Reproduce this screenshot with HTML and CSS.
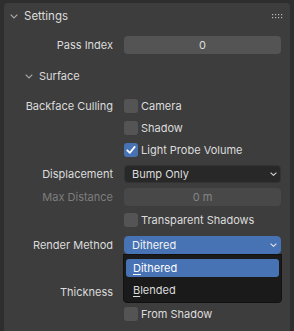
FILE: index.html
```html
<!DOCTYPE html>
<html>
<head>
<meta charset="utf-8">
<link rel="stylesheet" href="styles.css">
</head>
<body>
<div class="panel">
  <div class="panel-header">
    <svg class="chev" width="8" height="5" viewBox="0 0 8 5"><path d="M0.7 0.7 L4 4 L7.3 0.7" fill="none" stroke="#a8a8a8" stroke-width="1.2"/></svg>
    <span class="title">Settings</span>
    <svg class="grip" width="11" height="5" viewBox="0 0 11 5">
      <g fill="#b8b8b8"><rect x="0" y="0" width="1.2" height="1.2"/><rect x="3" y="0" width="1.2" height="1.2"/><rect x="6" y="0" width="1.2" height="1.2"/><rect x="9" y="0" width="1.2" height="1.2"/><rect x="0" y="3" width="1.2" height="1.2"/><rect x="3" y="3" width="1.2" height="1.2"/><rect x="6" y="3" width="1.2" height="1.2"/><rect x="9" y="3" width="1.2" height="1.2"/></g>
    </svg>
  </div>

  <div class="row pass-row">
    <div class="label">Pass Index</div>
    <div class="field num">0</div>
  </div>

  <div class="subheader">
    <svg class="chev" width="8" height="5" viewBox="0 0 8 5"><path d="M0.7 0.7 L4 4 L7.3 0.7" fill="none" stroke="#a8a8a8" stroke-width="1.2"/></svg>
    <span>Surface</span>
  </div>

  <div class="rows">
    <div class="row">
      <div class="label">Backface Culling</div>
      <div class="check"><span class="box"></span><span>Camera</span></div>
    </div>
    <div class="row">
      <div class="label"></div>
      <div class="check"><span class="box"></span><span>Shadow</span></div>
    </div>
    <div class="row">
      <div class="label"></div>
      <div class="check"><span class="box on"><svg width="14" height="14" viewBox="0 0 14 14"><path d="M3.3 7.3 L5.9 9.8 L10.7 3.9" fill="none" stroke="#fff" stroke-width="1.8" stroke-linecap="round" stroke-linejoin="round"/></svg></span><span>Light Probe Volume</span></div>
    </div>
    <div class="row sp2">
      <div class="label">Displacement</div>
      <div class="field menu"><span>Bump Only</span><svg width="7" height="4" viewBox="0 0 7 4"><path d="M0.6 0.6 L3.5 3.3 L6.4 0.6" fill="none" stroke="#d8d8d8" stroke-width="1.1"/></svg></div>
    </div>
    <div class="row sp1">
      <div class="label dim">Max Distance</div>
      <div class="field num disabled">0 m</div>
    </div>
    <div class="row sp1">
      <div class="label"></div>
      <div class="check"><span class="box"></span><span>Transparent Shadows</span></div>
    </div>
    <div class="row sp3 top">
      <div class="label">Render Method</div>
      <div class="field menu active">
        <span>Dithered</span><svg width="7" height="4" viewBox="0 0 7 4"><path d="M0.6 0.6 L3.5 3.3 L6.4 0.6" fill="none" stroke="#e8e8e8" stroke-width="1.1"/></svg>
        <div class="popup">
          <div class="item sel"><u>D</u>ithered</div>
          <div class="item"><u>B</u>lended</div>
        </div>
      </div>
    </div>
    <div class="row">
      <div class="label"></div>
      <div class="check"><span class="box"></span></div>
    </div>
    <div class="row sp3">
      <div class="label">Thickness</div>
      <div class="field menu"></div>
    </div>
    <div class="row">
      <div class="label"></div>
      <div class="check"><span class="box"></span><span>From Shadow</span></div>
    </div>
  </div>
</div>
</body>
</html>
```

FILE: styles.css
```css
html, body {
  margin: 0;
  padding: 0;
}
body {
  width: 294px;
  height: 331px;
  overflow: hidden;
  background: #2e2e2e;
  font-family: Inter, "Noto Sans", sans-serif;
  font-size: 11px;
  color: #dcdcdc;
}
.panel {
  margin: 3px 4px 0 4px;
  height: 340px;
  background: #3d3d3d;
  border-radius: 4px 4px 0 0;
  box-sizing: border-box;
  padding-right: 9px;
}
.panel-header {
  height: 26px;
  display: flex;
  align-items: center;
  padding-left: 6px;
  margin-right: -2px;
}
.chev {
  flex: none;
  display: block;
}
.title {
  margin-left: 6px;
  font-size: 11.5px;
  flex: 1;
}
.grip {
  display: block;
}
.row {
  display: grid;
  grid-template-columns: 109px 1fr;
  column-gap: 11px;
  align-items: center;
  height: 18px;
}
.row.top {
  position: relative;
  z-index: 2;
}
.pass-row {
  margin-top: 7px;
}
.label {
  text-align: right;
  white-space: nowrap;
  line-height: 18px;
}
.label.dim {
  color: #7e7e7e;
}
.field {
  height: 18px;
  border-radius: 4px;
  box-sizing: border-box;
  line-height: 18px;
  white-space: nowrap;
}
.field.num {
  background: #545454;
  text-align: center;
}
.field.disabled {
  background: #484848;
  color: #858585;
}
.field.menu {
  background: #282828;
  border: 1px solid #333333;
  display: flex;
  align-items: center;
  justify-content: space-between;
  padding: 0 3px 0 7px;
  position: relative;
}
.field.menu svg {
  display: block;
}
.field.active {
  background: #4772b3;
  border-color: #4772b3;
  color: #f2f2f2;
}
.subheader {
  margin-top: 12px;
  height: 20px;
  display: flex;
  align-items: center;
  padding-left: 21px;
}
.subheader span {
  margin-left: 6px;
}
.rows {
  margin-top: 11px;
  display: flex;
  flex-direction: column;
  gap: 4px;
}
.sp1 { margin-top: 1px; }
.sp2 { margin-top: 2px; }
.sp3 { margin-top: 3px; }
.check {
  display: flex;
  align-items: center;
  height: 18px;
  white-space: nowrap;
}
.box {
  width: 14px;
  height: 14px;
  box-sizing: border-box;
  background: #545454;
  border-radius: 3px;
  margin-right: 3px;
  flex: none;
}
.box.on {
  background: #4772b3;
}
.box svg {
  display: block;
}
.popup {
  position: absolute;
  left: -2px;
  top: 17px;
  width: 159px;
  height: 49px;
  box-sizing: border-box;
  background: #1a1a1a;
  border: 1px solid #111111;
  border-radius: 0 0 4px 4px;
  padding: 4px 2px 4px 2px;
  display: flex;
  flex-direction: column;
  gap: 4px;
  color: #dcdcdc;
}
.item {
  height: 18px;
  line-height: 18px;
  padding-left: 7px;
  border-radius: 3px;
}
.item.sel {
  background: #4772b3;
  color: #ffffff;
}
.item u {
  text-decoration-thickness: 1px;
  text-underline-offset: 2px;
}
```
